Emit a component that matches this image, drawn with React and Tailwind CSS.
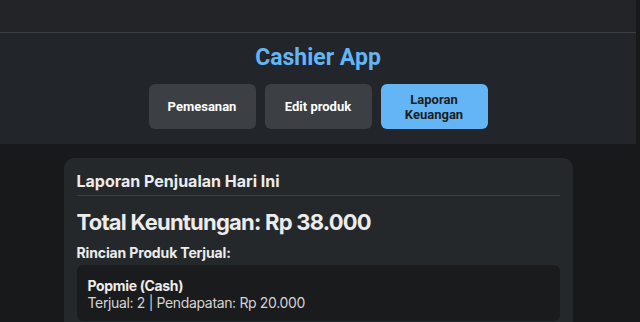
import { useState } from "react";

const TABS = [
  { id: "order", label: "Pemesanan" },
  { id: "edit", label: "Edit produk" },
  { id: "report", label: "Laporan Keuangan" },
];

const SOLD = [{ name: "Popmie (Cash)", qty: 2, revenue: "Rp 20.000" }];

export default function App() {
  const [tab, setTab] = useState("report");

  return (
    <div className="min-h-screen bg-[#18191b] pr-[4px]" style={{ fontFamily: "Inter, 'Noto Sans', sans-serif" }}>
      {/* top bar */}
      <div className="h-[33px] bg-[#222428] border-b border-[#3b3e42]" />

      {/* header */}
      <div className="bg-[#222529] h-[111px] flex flex-col items-center pt-[9px]" style={{ fontFamily: "Roboto, 'Liberation Sans', sans-serif" }}>
        <h1 className="text-[23px] leading-[32px] font-bold text-[#64b5f6]">Cashier App</h1>
        <div className="flex gap-[9px] mt-[10px]">
          {TABS.map((t) => (
            <button
              key={t.id}
              onClick={() => setTab(t.id)}
              className={`w-[107px] h-[45px] rounded-[6px] text-[13px] leading-[15px] font-bold px-4 ${
                tab === t.id ? "bg-[#64b5f6] text-[#1b1d20]" : "bg-[#3c3f43] text-white"
              }`}
            >
              {t.label}
            </button>
          ))}
        </div>
      </div>

      {/* report card */}
      <div className="mt-[14px] mx-auto w-[509px] bg-[#25282b] rounded-[10px] px-[13px] pt-[11px] pb-4 text-[#ececec]">
        <h2 className="text-[16px] leading-[24px] font-bold pb-[2px] border-b border-[#3b3e42]">Laporan Penjualan Hari Ini</h2>
        <p className="text-[22px] leading-[30px] font-bold tracking-[-0.035em] mt-[11px]">Total Keuntungan: Rp 38.000</p>
        <h3 className="text-[14px] leading-[20px] font-bold tracking-[-0.01em] mt-[6px]">Rincian Produk Terjual:</h3>
        <div className="mt-[2px] space-y-2">
          {SOLD.map((p) => (
            <div key={p.name} className="bg-[#1a1b1d] rounded-[6px] px-[11px] pt-[12px] pb-[10px]">
              <p className="text-[14px] leading-[17px] font-bold tracking-[-0.025em]">{p.name}</p>
              <p className="text-[14px] leading-[17px] tracking-[-0.025em] text-[#d4d4d4]">
                Terjual: {p.qty} | Pendapatan: {p.revenue}
              </p>
            </div>
          ))}
        </div>
      </div>
    </div>
  );
}
